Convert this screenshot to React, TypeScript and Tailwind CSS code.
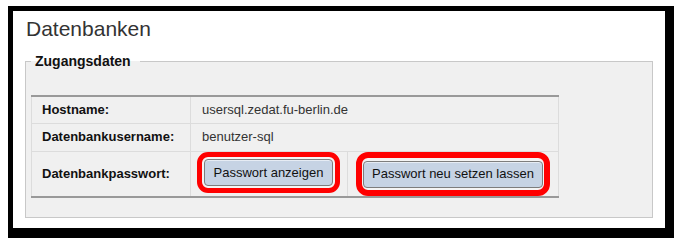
export default function App() {
  const rows = [
    { label: 'Hostname:', value: 'usersql.zedat.fu-berlin.de', h: 'h-[27px]' },
    { label: 'Datenbankusername:', value: 'benutzer-sql', h: 'h-[28px]' },
  ];

  return (
    <div className="w-[680px] h-[240px] bg-white pt-[6px] pl-[8px] font-['Liberation_Sans',Arial,sans-serif]">
      <div className="w-[666px] h-[232px] bg-white border-black border-t-[5px] border-l-[5px] border-r-[9px] border-b-[10px] px-[12px]">
        <h1 className="mt-[6px] pl-[1px] text-[21px] leading-[24px] text-[#333]">Datenbanken</h1>

        <fieldset className="mt-[12px] w-[628px] border border-[#c8c8c8] bg-[#f0f0f0] pl-[5px] pt-[26px] pb-[19px]">
          <legend className="pl-[4px] pr-[9px] text-[14px] leading-[16px] font-bold text-[#111]">
            Zugangsdaten
          </legend>

          <table className="table-fixed w-[527px] border-collapse text-[13px]">
            <colgroup>
              <col className="w-[159px]" />
              <col className="w-[157px]" />
              <col className="w-[211px]" />
            </colgroup>
            <tbody>
              {rows.map((r, i) => (
                <tr key={r.label}>
                  <td
                    className={`${r.h} pl-[10px] align-middle font-bold text-[#111] border border-[#dcdcdc] ${
                      i === 0 ? 'border-t-2 border-t-[#999]' : ''
                    }`}
                  >
                    {r.label}
                  </td>
                  <td
                    colSpan={2}
                    className={`${r.h} pl-[11px] align-middle text-[#333] border border-[#dcdcdc] ${
                      i === 0 ? 'border-t-2 border-t-[#999]' : ''
                    }`}
                  >
                    {r.value}
                  </td>
                </tr>
              ))}
              <tr>
                <td className="h-[44px] pl-[10px] align-middle font-bold text-[#111] border border-[#dcdcdc] border-b-2 border-b-[#999]">
                  Datenbankpasswort:
                </td>
                <td className="h-[44px] pl-[6px] align-middle border border-[#dcdcdc] border-b-2 border-b-[#999]">
                  <div className="inline-flex border-[5px] border-[#f00] rounded-[11px] p-[2px] bg-[#f4f4f4] -mt-[2px]">
                    <button className="w-[129px] h-[27px] rounded-[4px] border border-[#7d7d7d] bg-[#c6d3e4] text-[13px] text-[#111] shadow-[inset_0_1px_0_#e6ecf4]">
                      Passwort anzeigen
                    </button>
                  </div>
                </td>
                <td className="h-[44px] pl-[8px] align-middle border border-[#dcdcdc] border-b-2 border-b-[#999]">
                  <div className="inline-flex border-[6px] border-[#f00] rounded-[12px] px-[1px] pt-[3px] pb-[2px] bg-[#f4f4f4]">
                    <button className="w-[180px] h-[27px] rounded-[4px] border border-[#7d7d7d] bg-[#c6d3e4] text-[13px] text-[#111] shadow-[inset_0_1px_0_#e6ecf4]">
                      Passwort neu setzen lassen
                    </button>
                  </div>
                </td>
              </tr>
            </tbody>
          </table>
        </fieldset>
      </div>
    </div>
  );
}
